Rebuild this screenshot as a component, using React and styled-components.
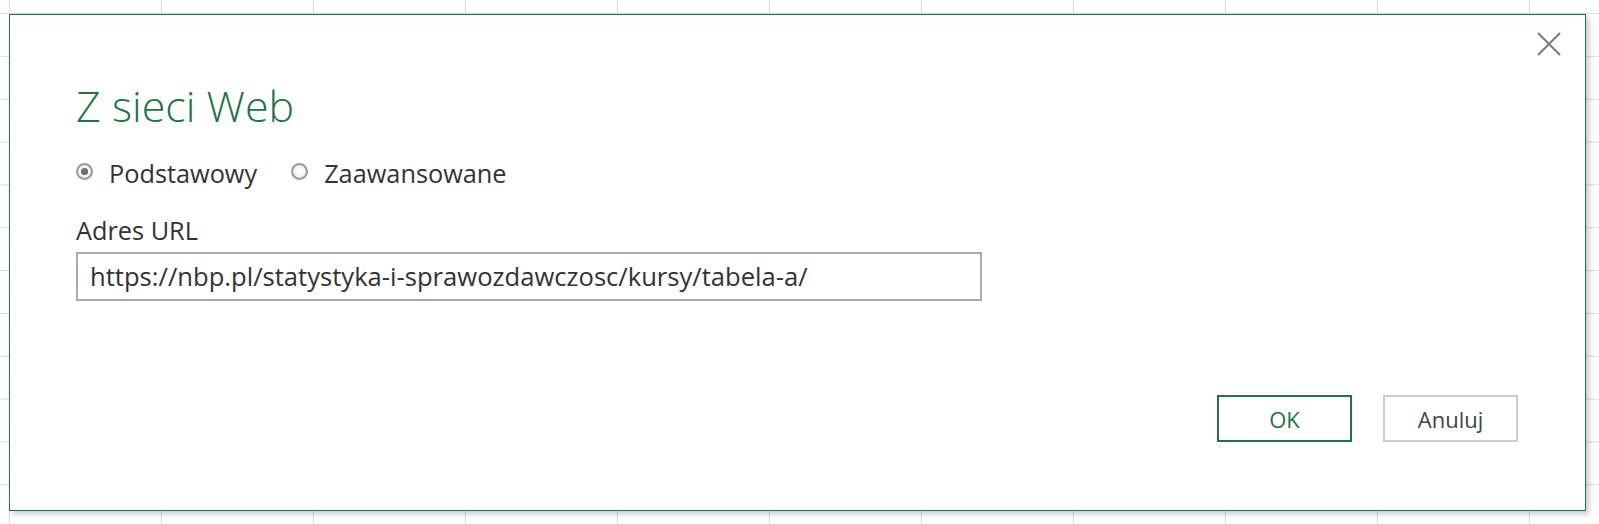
import React from "react";
import styled, { createGlobalStyle } from "styled-components";

const Global = createGlobalStyle`
  html, body {
    margin: 0;
    padding: 0;
  }
  body {
    min-height: 100vh;
    background-color: #ffffff;
    background-image:
      linear-gradient(to right, #dcdcdc 1px, transparent 1px),
      linear-gradient(to bottom, #dcdcdc 1px, transparent 1px);
    background-size: 152px 42.85px;
    background-position: 9px 13px;
    font-family: "Open Sans", "Noto Sans", "Liberation Sans", sans-serif;
    overflow: hidden;
  }
`;

const Dialog = styled.div`
  box-sizing: border-box;
  width: 1577px;
  height: 497px;
  margin: 14px 0 0 9px;
  background: #ffffff;
  border: 1px solid #2c6b55;
  box-shadow: 3px 3px 6px rgba(0, 0, 0, 0.22);
  display: flex;
  flex-direction: column;
  padding: 0 67px 0 66px;
`;

const TopBar = styled.div`
  height: 65px;
  display: flex;
  justify-content: flex-end;
  margin-right: -43px;
`;

const CloseButton = styled.button`
  width: 24px;
  height: 24px;
  margin-top: 17px;
  padding: 0;
  border: none;
  background: transparent;
  display: flex;
  align-items: center;
  justify-content: center;
  cursor: pointer;
`;

const Title = styled.h1`
  margin: 0;
  font-family: "Open Sans", "Noto Sans", sans-serif;
  font-weight: 300;
  font-size: 43px;
  line-height: 52px;
  color: #217346;
`;

const RadioGroup = styled.div`
  margin-top: 24px;
  display: flex;
  align-items: center;
  gap: 34px;
`;

const RadioOption = styled.label`
  display: flex;
  align-items: center;
  gap: 16px;
  font-size: 25.3px;
  line-height: 34px;
  color: #333333;
`;

const RadioCircle = styled.span`
  box-sizing: border-box;
  width: 17px;
  height: 17px;
  margin: 0 0 4px 0;
  border-radius: 50%;
  border: 2px solid #9a9a9a;
  background: radial-gradient(circle at 50% 45%, #ffffff 0%, #f4f4f4 60%, #d9d9d9 100%);
  box-shadow: inset 0 0 1px rgba(0, 0, 0, 0.25);
  display: flex;
  align-items: center;
  justify-content: center;
  &::after {
    content: "";
    display: ${(p) => (p.$checked ? "block" : "none")};
    width: 7px;
    height: 7px;
    border-radius: 50%;
    background: radial-gradient(circle at 45% 40%, #7a7a7a 0%, #555555 100%);
  }
`;

const FieldLabel = styled.div`
  margin-top: 23px;
  font-size: 25.3px;
  line-height: 34px;
  color: #333333;
`;

const UrlInput = styled.div`
  box-sizing: border-box;
  margin-top: 5px;
  width: 906px;
  height: 49px;
  border: 2px solid #ababab;
  padding: 0 12px;
  display: flex;
  align-items: center;
  font-size: 25.6px;
  color: #333333;
  white-space: nowrap;
`;

const ButtonRow = styled.div`
  margin-top: 94px;
  display: flex;
  justify-content: flex-end;
  gap: 31px;
`;

const Button = styled.button`
  box-sizing: border-box;
  width: 135px;
  height: 47px;
  background: #ffffff;
  border: 2px solid ${(p) => (p.$primary ? "#217346" : "#cccccc")};
  color: ${(p) => (p.$primary ? "#217346" : "#444444")};
  font-family: "Open Sans", "Noto Sans", sans-serif;
  font-size: 22px;
  padding: 0;
  cursor: pointer;
`;

export default function App() {
  return (
    <>
      <Global />
      <Dialog>
        <TopBar>
          <CloseButton aria-label="Zamknij">
            <svg width="24" height="24" viewBox="0 0 24 24">
              <path d="M1 1 L23 23 M23 1 L1 23" stroke="#7a7a7a" strokeWidth="2" fill="none" />
            </svg>
          </CloseButton>
        </TopBar>
        <Title>Z sieci Web</Title>
        <RadioGroup>
          <RadioOption>
            <RadioCircle $checked />
            Podstawowy
          </RadioOption>
          <RadioOption>
            <RadioCircle />
            Zaawansowane
          </RadioOption>
        </RadioGroup>
        <FieldLabel>Adres URL</FieldLabel>
        <UrlInput>https://nbp.pl/statystyka-i-sprawozdawczosc/kursy/tabela-a/</UrlInput>
        <ButtonRow>
          <Button $primary>OK</Button>
          <Button>Anuluj</Button>
        </ButtonRow>
      </Dialog>
    </>
  );
}
